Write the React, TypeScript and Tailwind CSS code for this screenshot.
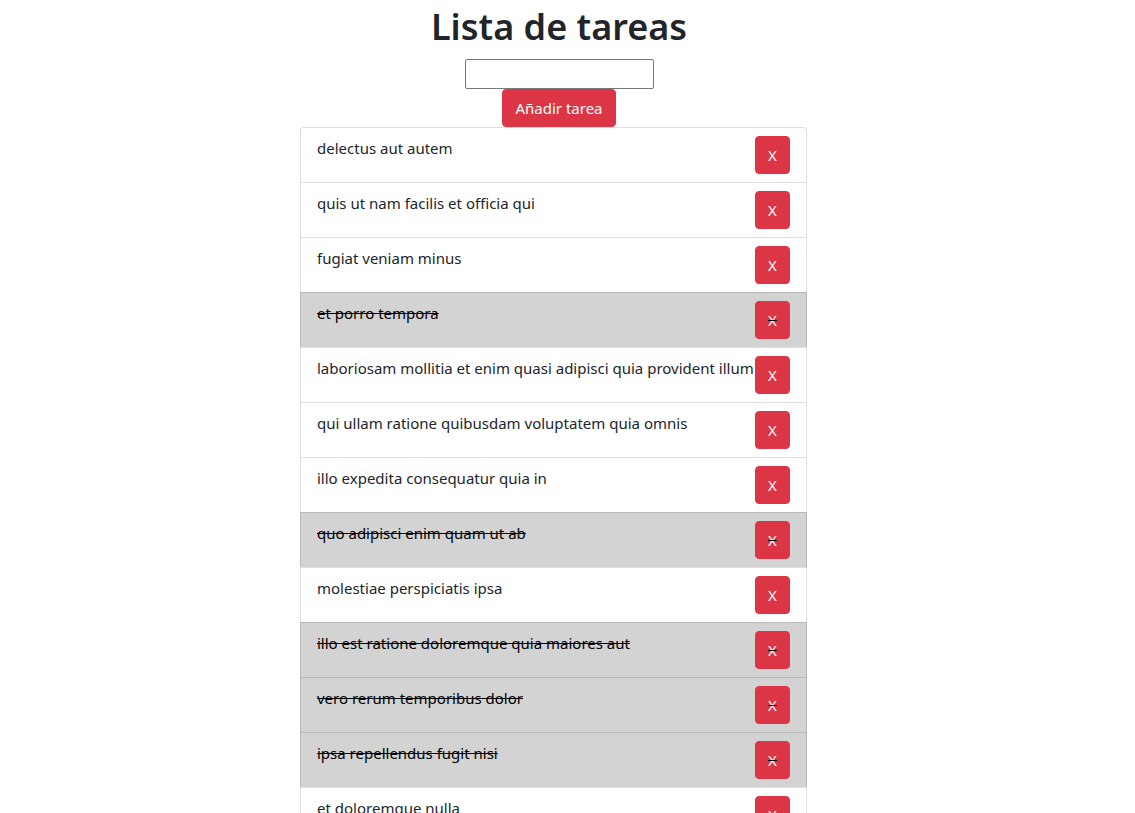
import { useState } from 'react';

type Tarea = { id: number; title: string; completed: boolean };

const inicial: Tarea[] = [
  { id: 1, title: 'delectus aut autem', completed: false },
  { id: 2, title: 'quis ut nam facilis et officia qui', completed: false },
  { id: 3, title: 'fugiat veniam minus', completed: false },
  { id: 4, title: 'et porro tempora', completed: true },
  { id: 5, title: 'laboriosam mollitia et enim quasi adipisci quia provident illum', completed: false },
  { id: 6, title: 'qui ullam ratione quibusdam voluptatem quia omnis', completed: false },
  { id: 7, title: 'illo expedita consequatur quia in', completed: false },
  { id: 8, title: 'quo adipisci enim quam ut ab', completed: true },
  { id: 9, title: 'molestiae perspiciatis ipsa', completed: false },
  { id: 10, title: 'illo est ratione doloremque quia maiores aut', completed: true },
  { id: 11, title: 'vero rerum temporibus dolor', completed: true },
  { id: 12, title: 'ipsa repellendus fugit nisi', completed: true },
  { id: 13, title: 'et doloremque nulla', completed: false },
  { id: 14, title: 'repellendus sunt dolores architecto voluptatum', completed: true },
  { id: 15, title: 'ab voluptatum amet voluptas', completed: true },
];

export default function App() {
  const [tareas, setTareas] = useState(inicial);
  const [texto, setTexto] = useState('');

  const anadir = () => {
    if (!texto.trim()) return;
    setTareas(prev => [...prev, { id: Date.now(), title: texto, completed: false }]);
    setTexto('');
  };

  const toggle = (id: number) =>
    setTareas(prev => prev.map(t => (t.id === id ? { ...t, completed: !t.completed } : t)));

  const borrar = (id: number) => setTareas(prev => prev.filter(t => t.id !== id));

  return (
    <div className="min-h-screen bg-white text-[#212529] font-['Segoe_UI','Noto_Sans',sans-serif] text-[15px] leading-6">
      <div className="w-[1118px] pt-[3px] flex flex-col items-center">
        <h1 className="text-[36px] leading-[48px] font-semibold mb-2">Lista de tareas</h1>
        <input
          value={texto}
          onChange={e => setTexto(e.target.value)}
          className="w-[189px] h-[30px] border border-[#767676] rounded-[2px] px-1 text-[13px]"
        />
        <button
          onClick={anadir}
          className="bg-[#dc3545] border border-[#dc3545] text-white rounded px-3 py-1.5 leading-6"
        >
          Añadir tarea
        </button>
        <ul className="w-[507px] mr-[11px] flex flex-col">
          {tareas.map((t, i) => (
            <li
              key={t.id}
              onClick={() => toggle(t.id)}
              className={`flex items-start justify-between px-4 py-2 border border-[rgba(0,0,0,0.125)] ${
                i === 0 ? 'rounded-t' : '-mt-px'
              } ${t.completed ? 'bg-[#d3d3d3] text-black line-through' : 'bg-white'}`}
            >
              <span className="flex-1">{t.title}</span>
              <button
                onClick={e => {
                  e.stopPropagation();
                  borrar(t.id);
                }}
                className={`shrink-0 w-[35px] bg-[#dc3545] border border-[#dc3545] text-white rounded py-1.5 leading-6 ${
                  t.completed ? 'line-through decoration-black' : 'no-underline'
                }`}
              >
                X
              </button>
            </li>
          ))}
        </ul>
      </div>
    </div>
  );
}
